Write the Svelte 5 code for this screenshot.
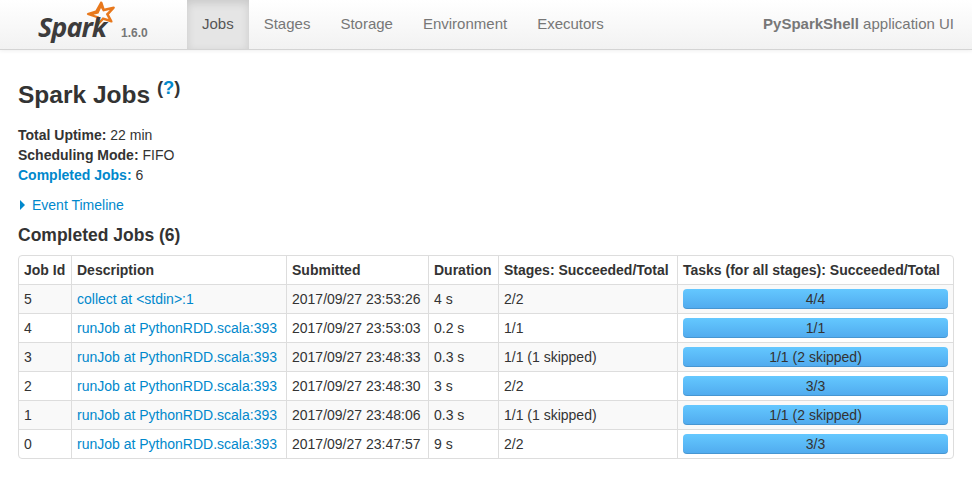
<script>
  const tabs = ['Jobs', 'Stages', 'Storage', 'Environment', 'Executors'];
  const jobs = [
    { id: 5, desc: 'collect at <stdin>:1', time: '2017/09/27 23:53:26', dur: '4 s', stages: '2/2', tasks: '4/4' },
    { id: 4, desc: 'runJob at PythonRDD.scala:393', time: '2017/09/27 23:53:03', dur: '0.2 s', stages: '1/1', tasks: '1/1' },
    { id: 3, desc: 'runJob at PythonRDD.scala:393', time: '2017/09/27 23:48:33', dur: '0.3 s', stages: '1/1 (1 skipped)', tasks: '1/1 (2 skipped)' },
    { id: 2, desc: 'runJob at PythonRDD.scala:393', time: '2017/09/27 23:48:30', dur: '3 s', stages: '2/2', tasks: '3/3' },
    { id: 1, desc: 'runJob at PythonRDD.scala:393', time: '2017/09/27 23:48:06', dur: '0.3 s', stages: '1/1 (1 skipped)', tasks: '1/1 (2 skipped)' },
    { id: 0, desc: 'runJob at PythonRDD.scala:393', time: '2017/09/27 23:47:57', dur: '9 s', stages: '2/2', tasks: '3/3' }
  ];
</script>

<div class="navbar">
  <div class="brand">
    <span class="logo">
      <svg class="star" width="30" height="28" viewBox="0 0 30 28">
        <path fill="#e8781c" fill-rule="evenodd" d="M14.5 0.5 Q16 0 16.5 1.5 L18.5 7.5 L27.5 5.5 Q29.5 5.5 28.5 7.5 L23 13.5 L26.5 20 Q27 22 25 21.5 L17.5 19 L11 26 Q9.5 27 9.5 25 L10.5 17 L1.5 14 Q0 13 1.5 12 L9.5 9.5 Z M15 7 L12.5 12.5 L7.5 13.7 L13 15.6 L13 20.5 L16.7 16.2 L22.5 18 L19.8 13 L23.8 9 L17 10.5 Z" />
      </svg>
      <span class="wordmark">Spark</span>
    </span>
    <span class="version">1.6.0</span>
  </div>
  <ul class="tabs">
    {#each tabs as tab, i}
      <li class="tab" class:active={i === 0}>{tab}</li>
    {/each}
  </ul>
  <p class="app-name"><strong>PySparkShell</strong> application UI</p>
</div>

<div class="content">
  <h3 class="title">Spark Jobs <sup class="help">(<a href="#top">?</a>)</sup></h3>

  <ul class="summary">
    <li><strong>Total Uptime:</strong> 22 min</li>
    <li><strong>Scheduling Mode:</strong> FIFO</li>
    <li><a href="#completed"><strong>Completed Jobs:</strong></a> 6</li>
  </ul>

  <div class="timeline">
    <span class="arrow"></span>
    <a href="#timeline">Event Timeline</a>
  </div>

  <h4 class="section">Completed Jobs (6)</h4>

  <table>
    <thead>
      <tr>
        <th class="c-id">Job Id</th>
        <th class="c-desc">Description</th>
        <th class="c-time">Submitted</th>
        <th class="c-dur">Duration</th>
        <th class="c-stages">Stages: Succeeded/Total</th>
        <th>Tasks (for all stages): Succeeded/Total</th>
      </tr>
    </thead>
    <tbody>
      {#each jobs as job}
        <tr>
          <td>{job.id}</td>
          <td><a href="#job">{job.desc}</a></td>
          <td>{job.time}</td>
          <td>{job.dur}</td>
          <td>{job.stages}</td>
          <td class="c-bar"><div class="progress">{job.tasks}</div></td>
        </tr>
      {/each}
    </tbody>
  </table>
</div>

<style>
  :global(body) {
    margin: 0;
    background: #fff;
    font-family: "Liberation Sans", Arial, sans-serif;
    font-size: 14px;
    line-height: 20px;
    color: #333;
  }

  a {
    color: #0088cc;
    text-decoration: none;
  }

  .navbar {
    display: flex;
    height: 49px;
    background: linear-gradient(to bottom, #ffffff, #f2f2f2);
    border-bottom: 1px solid #d4d4d4;
    box-shadow: 0 1px 4px rgba(0, 0, 0, 0.065);
  }

  .brand {
    display: flex;
    width: 187px;
    flex-shrink: 0;
    box-sizing: border-box;
    padding-left: 38px;
  }

  .logo {
    position: relative;
    display: block;
    width: 83px;
    height: 49px;
  }

  .star {
    position: absolute;
    left: 48px;
    top: 1px;
  }

  .wordmark {
    position: absolute;
    left: 0;
    top: 11px;
    font-family: "Open Sans", sans-serif;
    font-size: 27px;
    line-height: 32px;
    font-weight: 700;
    font-style: italic;
    letter-spacing: -1px;
    color: #3d3c3c;
  }

  .version {
    margin-top: 23px;
    font-size: 12px;
    line-height: 20px;
    font-weight: 700;
    color: #777;
  }

  .tabs {
    display: flex;
    margin: 0;
    padding: 0;
    list-style: none;
  }

  .tab {
    padding: 14px 15px 15px;
    font-size: 15px;
    color: #777;
  }

  .tab.active {
    background: #e5e5e5;
    color: #555;
    box-shadow: inset 0 3px 8px rgba(0, 0, 0, 0.125);
  }

  .app-name {
    margin: 14px 18px 0 auto;
    font-size: 15px;
    color: #777;
  }

  .content {
    padding: 0 18px;
  }

  .title {
    margin: 30px 0 0;
    font-size: 24.5px;
    line-height: 30px;
    font-weight: 700;
    color: #333;
  }

  .help {
    font-size: 18.4px;
    line-height: 0;
    position: relative;
    vertical-align: baseline;
    top: -9px;
  }

  .summary {
    margin: 15px 0 0;
    padding: 0;
    list-style: none;
  }

  .summary strong {
    font-weight: 700;
  }

  .timeline {
    display: flex;
    align-items: center;
    margin-top: 10px;
    height: 20px;
  }

  .arrow {
    width: 0;
    height: 0;
    margin: 0 7px 0 2px;
    border-left: 5px solid #0088cc;
    border-top: 5px solid transparent;
    border-bottom: 5px solid transparent;
  }

  .section {
    margin: 10px 0 0;
    font-size: 17.5px;
    line-height: 20px;
    font-weight: 700;
    color: #333;
  }

  table {
    width: 936px;
    margin-top: 10px;
    border-collapse: separate;
    border-spacing: 0;
    border: 1px solid #ddd;
    border-radius: 4px;
    table-layout: fixed;
  }

  th, td {
    height: 28px;
    box-sizing: content-box;
    padding: 0 5px;
    border-left: 1px solid #ddd;
    border-top: 1px solid #ddd;
    text-align: left;
    vertical-align: middle;
    white-space: nowrap;
  }

  th {
    border-top: 0;
    font-weight: 700;
  }

  th:first-child, td:first-child {
    border-left: 0;
  }

  tbody tr:nth-child(odd) td {
    background: #f9f9f9;
  }

  .c-id { width: 42px; }
  .c-desc { width: 204px; }
  .c-time { width: 131px; }
  .c-dur { width: 59px; }
  .c-stages { width: 168px; }

  .progress {
    height: 20px;
    line-height: 20px;
    text-align: center;
    color: #333;
    border-radius: 4px;
    background: linear-gradient(to bottom, #64c8ff, #50aaee);
    box-shadow: inset 0 -1px 0 rgba(0, 0, 0, 0.12);
  }
</style>
